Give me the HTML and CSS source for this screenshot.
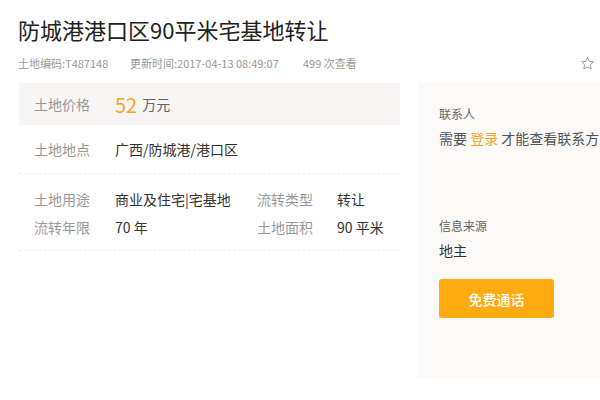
FILE: index.html
```html
<!DOCTYPE html>
<html lang="zh-CN">
<head>
  <meta charset="UTF-8">
  <title>防城港港口区90平米宅基地转让</title>
  <link rel="stylesheet" href="styles.css">
</head>
<body>
  <div class="page">
    <h1 class="title">防城港港口区90平米宅基地转让</h1>
    <div class="meta">
      <span class="meta-item code">土地编码:T487148</span>
      <span class="meta-item time">更新时间:2017-04-13 08:49:07</span>
      <span class="meta-item">499 次查看</span>
      <svg class="star" width="15" height="15" viewBox="0 0 24 24">
        <path d="M12 2.5l2.9 6.1 6.6.8-4.9 4.6 1.3 6.6L12 17.3l-5.9 3.3 1.3-6.6-4.9-4.6 6.6-.8z" fill="none" stroke="#9a9a9a" stroke-width="1.6" stroke-linejoin="round"/>
      </svg>
    </div>

    <div class="main">
      <div class="info">
        <div class="price-row">
          <span class="label">土地价格</span>
          <span class="price">52</span>
          <span class="unit">万元</span>
        </div>
        <div class="row line">
          <span class="label">土地地点</span>
          <span class="value">广西/防城港/港口区</span>
        </div>
        <div class="grid line">
          <span class="label">土地用途</span>
          <span class="value">商业及住宅|宅基地</span>
          <span class="label">流转类型</span>
          <span class="value">转让</span>
          <span class="label">流转年限</span>
          <span class="value">70 年</span>
          <span class="label">土地面积</span>
          <span class="value">90 平米</span>
        </div>
      </div>

      <div class="side">
        <div class="side-label">联系人</div>
        <div class="side-text">需要 <a class="login" href="#">登录</a> 才能查看联系方式</div>
        <div class="side-label source">信息来源</div>
        <div class="side-text owner">地主</div>
        <button class="call">免费通话</button>
      </div>
    </div>
  </div>
</body>
</html>
```

FILE: styles.css
```css
body {
  margin: 0;
  font-family: "Noto Sans CJK SC", "Noto Sans", sans-serif;
  color: #333;
  background: #fff;
  overflow: hidden;
}

.page {
  width: 640px;
  padding-left: 18px;
}

.title {
  margin: 0;
  padding-top: 14px;
  font-size: 22px;
  font-weight: normal;
  line-height: 30px;
  color: #222;
}

.meta {
  display: flex;
  align-items: center;
  height: 24px;
  margin-top: 7px;
  font-size: 11px;
  color: #999;
  width: 577px;
}

.meta-item.code {
  width: 112px;
}

.meta-item.time {
  width: 173px;
}

.star {
  margin-left: auto;
}

.main {
  display: flex;
  margin-top: 8px;
}

.info {
  width: 381px;
  margin-left: 1px;
}

.label {
  color: #999;
  font-size: 14px;
}

.value {
  color: #333;
  font-size: 14px;
}

.price-row {
  display: flex;
  align-items: center;
  height: 42px;
  padding-left: 15px;
  background: #f7f6f4;
}

.price-row .label {
  width: 81px;
}

.price {
  color: #f5a623;
  font-size: 20px;
  margin-right: 5px;
}

.unit {
  color: #666;
  font-size: 14px;
}

.line {
  border-bottom: 1px dashed #ececec;
}

.row {
  display: flex;
  align-items: center;
  height: 48px;
  padding-left: 15px;
}

.row .label {
  width: 81px;
}

.grid {
  display: grid;
  grid-template-columns: 81px 142px 80px 1fr;
  line-height: 28px;
  padding: 11px 0 9px 15px;
}

.side {
  width: 200px;
  height: 295px;
  margin-left: 18px;
  padding: 22px 0 0 21px;
  box-sizing: border-box;
  background: #fbfaf9;
}

.side-label {
  font-size: 12px;
  color: #666;
  line-height: 18px;
}

.side-text {
  font-size: 14px;
  color: #555;
  line-height: 22px;
  margin-top: 4px;
  white-space: nowrap;
}

.login {
  color: #f5a623;
  text-decoration: none;
}

.source {
  margin-top: 68px;
}

.owner {
  color: #333;
}

.call {
  display: block;
  width: 115px;
  height: 39px;
  margin-top: 18px;
  border: none;
  border-radius: 3px;
  background: #ffab0f;
  color: #fff;
  font-family: inherit;
  font-size: 14px;
  font-weight: 500;
}
```
